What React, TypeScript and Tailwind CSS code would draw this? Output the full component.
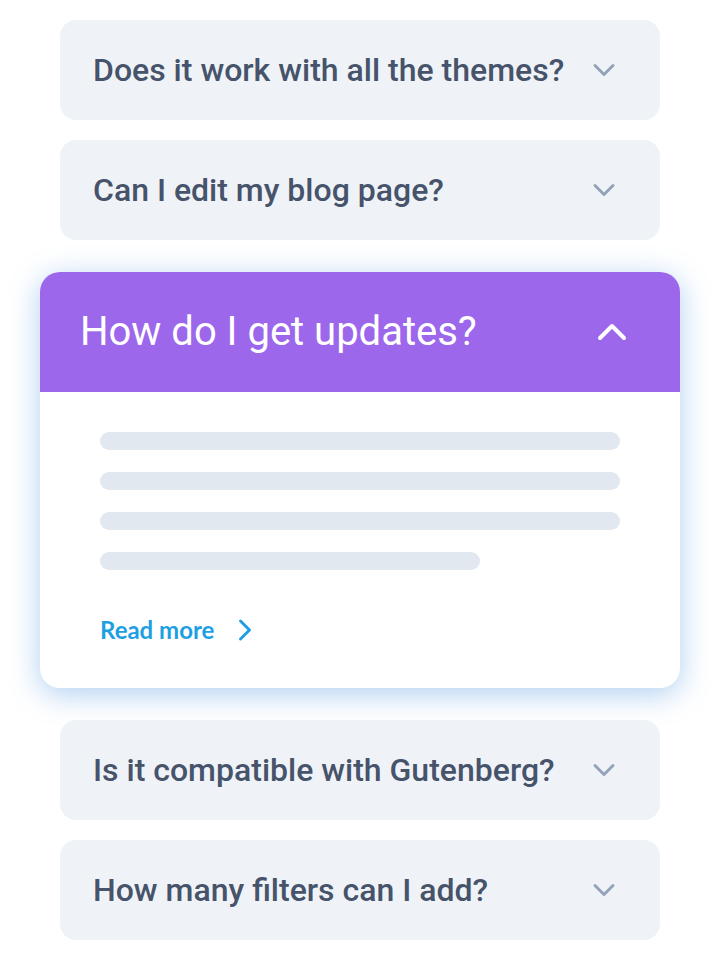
import { ChevronDown, ChevronUp, ChevronRight } from 'lucide-react';

const before = ['Does it work with all the themes?', 'Can I edit my blog page?'];
const after = ['Is it compatible with Gutenberg?', 'How many filters can I add?'];

function Closed({ q }: { q: string }) {
  return (
    <div className="mx-[60px] h-[100px] rounded-2xl bg-[#eff3f8] flex items-center justify-between pl-[33px] pr-[38px]">
      <span className="text-[32px] font-medium text-[#46536a]">{q}</span>
      <ChevronDown className="w-9 h-9 text-[#94a3b8]" strokeWidth={2} />
    </div>
  );
}

export default function App() {
  return (
    <div className="w-[720px] h-[960px] bg-white pt-5 flex flex-col font-['Roboto',sans-serif]">
      <div className="flex flex-col gap-5">
        {before.map((q) => (
          <Closed key={q} q={q} />
        ))}
      </div>

      <div className="mx-10 mt-8 mb-8 h-[416px] rounded-[20px] bg-white overflow-hidden shadow-[0_6px_30px_rgba(42,130,215,0.38)]">
        <div className="h-[120px] bg-[#9d67ec] flex items-center justify-between pl-10 pr-11">
          <span className="text-[40px] text-white">How do I get updates?</span>
          <ChevronUp className="w-12 h-12 text-white" strokeWidth={2} />
        </div>
        <div className="px-[60px] pt-10">
          <div className="flex flex-col gap-[22px]">
            <div className="h-[18px] rounded-full bg-[#e2e8f0]" />
            <div className="h-[18px] rounded-full bg-[#e2e8f0]" />
            <div className="h-[18px] rounded-full bg-[#e2e8f0]" />
            <div className="h-[18px] w-[380px] rounded-full bg-[#e2e8f0]" />
          </div>
          <div className="mt-[42px] h-9 flex items-center gap-[13px] text-[#1e9fe3]">
            <span className="font-['Lato',sans-serif] font-bold text-[24px] leading-none">Read more</span>
            <ChevronRight className="w-9 h-9" strokeWidth={2} />
          </div>
        </div>
      </div>

      <div className="flex flex-col gap-5">
        {after.map((q) => (
          <Closed key={q} q={q} />
        ))}
      </div>
    </div>
  );
}
